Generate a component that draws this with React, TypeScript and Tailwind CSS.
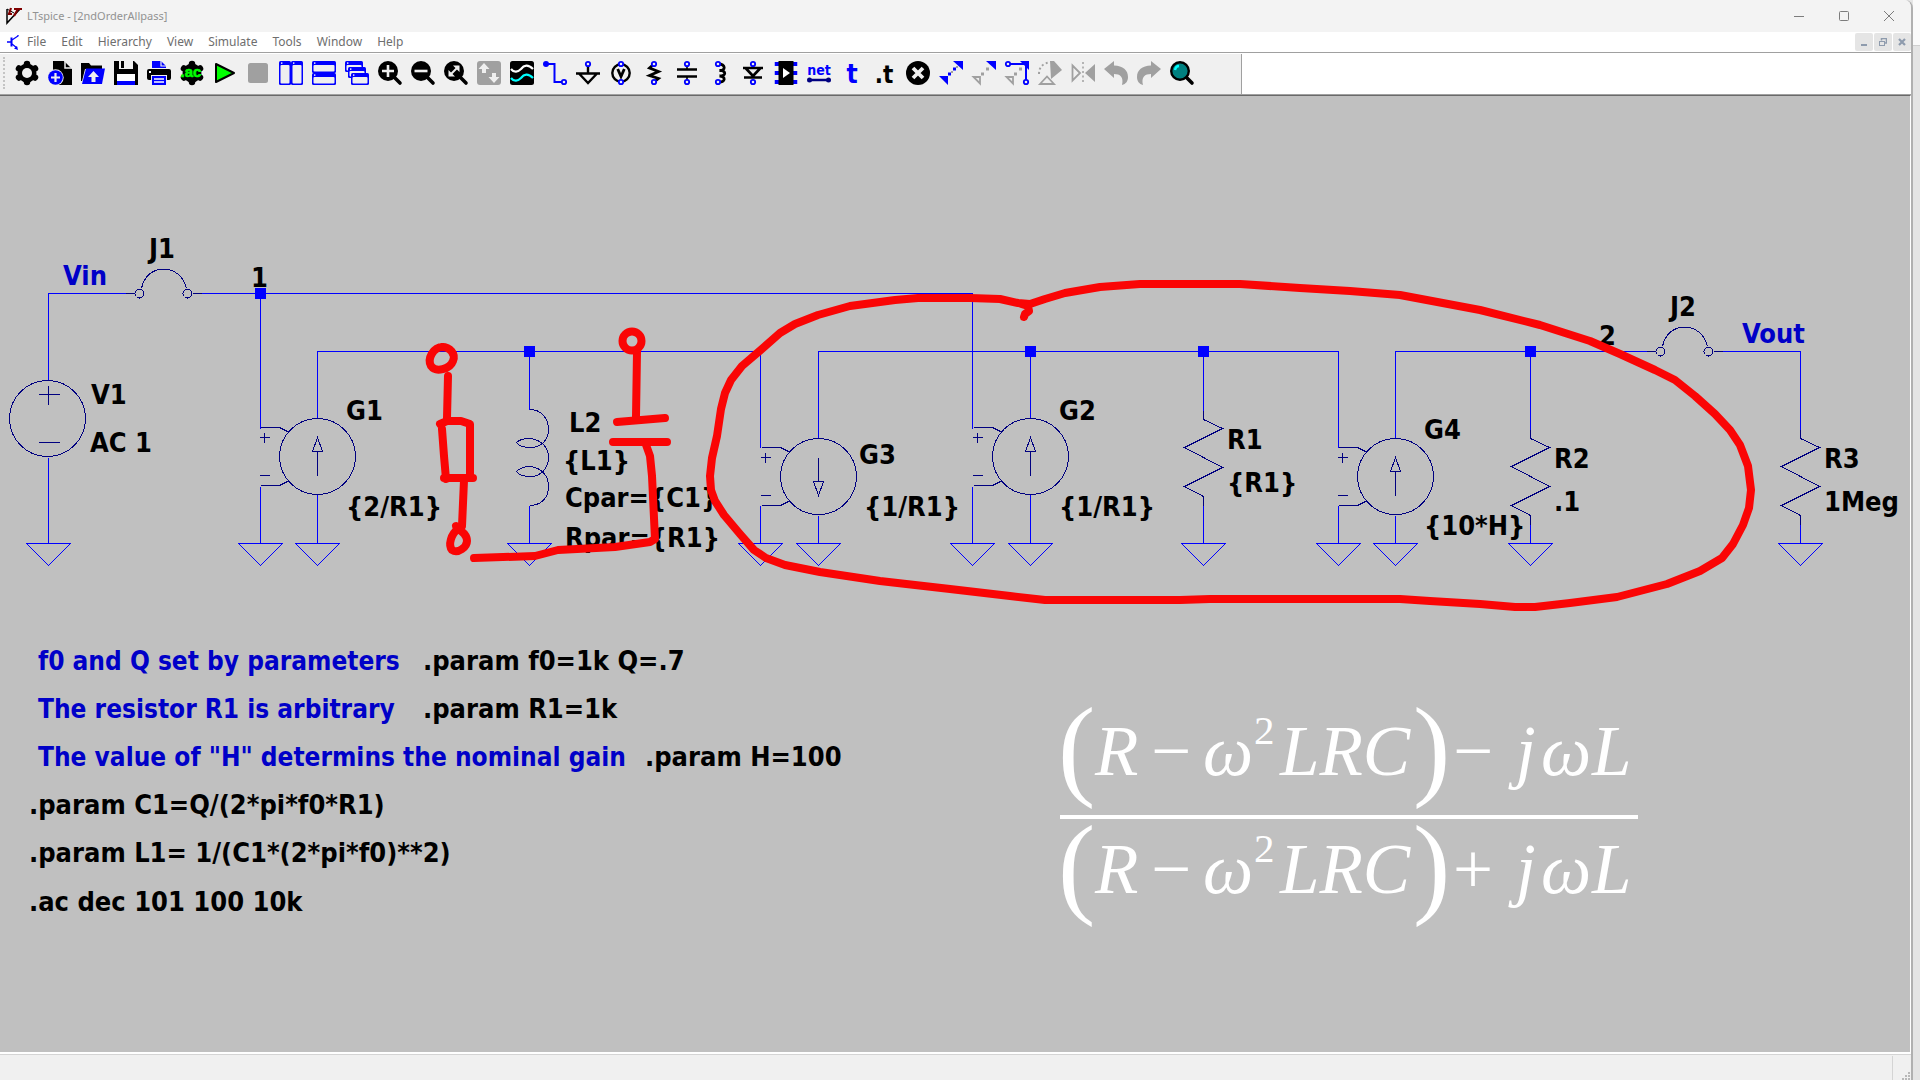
import React from "react";

const MENUS = ["File", "Edit", "Hierarchy", "View", "Simulate", "Tools", "Window", "Help"];

const BLUE = "#0000ff";
const NAVY = "#000080";
const GREY = "#a0a0a0";

const Pin = ({ x, y }: { x: number; y: number }) => (
  <circle cx={x} cy={y} r="2.2" fill="#efefef" stroke={BLUE} strokeWidth="1.8" />
);

const Lens = () => (
  <>
    <path d="M16 16 L22 22" stroke="#000" strokeWidth="3.6" strokeLinecap="round" />
    <circle cx="10" cy="10" r="10" fill="#000" />
  </>
);

const Cog = () => (
  <>
    <circle cx="12" cy="12" r="9.5" fill="#000" />
    <path
      d="M12 3 V21 M4 7.5 L20 16.5 M4 16.5 L20 7.5"
      stroke="#000"
      strokeWidth="6.5"
      strokeLinecap="round"
    />
  </>
);

const Pane = ({ x, y, w, h }: { x: number; y: number; w: number; h: number }) => (
  <>
    <rect x={x} y={y} width={w} height={h} rx="1.5" fill={BLUE} />
    <rect x={x + 1.5} y={y + 4} width={w - 3} height={h - 5.5} rx="1" fill="#efefef" />
    <rect x={x + 2} y={y + 1.4} width="1.4" height="1.4" fill="#fff" />
  </>
);

interface Tool {
  name: string;
  art: React.ReactNode;
}

const TOOLS: Tool[] = [
  {
    name: "Settings",
    art: (
      <>
        <Cog />
        <circle cx="12" cy="12" r="5" fill="#efefef" />
      </>
    ),
  },
  {
    name: "New schematic",
    art: (
      <>
        <path d="M5 0 H16 L24 8 V24 H5 Z" />
        <path d="M17 0 V7 H24" fill="none" stroke="#efefef" strokeWidth="1.5" />
        <circle cx="7.5" cy="16.5" r="8.2" fill="#efefef" />
        <circle cx="7.5" cy="16.5" r="7.3" fill={BLUE} />
        <path d="M7.5 12 V21 M3 16.5 H12" stroke="#efefef" strokeWidth="2.2" />
      </>
    ),
  },
  {
    name: "Open",
    art: (
      <>
        <path d="M0 2 H8 L10 4.5 H21 V8 H4 L1 20 H0 Z" />
        <path d="M5 7.5 H24 L21 23 H1 Z" fill={BLUE} />
        <path d="M12.5 10 L18 16 H14.5 V21 H10.5 V16 H7 Z" fill="#efefef" />
      </>
    ),
  },
  {
    name: "Save",
    art: (
      <>
        <path d="M0 0 H20 L24 4 V24 H0 Z" />
        <rect x="5" y="0" width="14" height="8" fill="#efefef" />
        <rect x="7" y="0" width="3" height="7" />
        <rect x="3" y="13" width="18" height="9" fill="#fff" />
        <rect x="3" y="20" width="18" height="4" fill={BLUE} />
      </>
    ),
  },
  {
    name: "Print",
    art: (
      <>
        <path d="M5 0 H14 L19 5 V7 H5 Z" fill={BLUE} />
        <path d="M14 0 V5 H19" fill="none" stroke="#efefef" strokeWidth="1.2" />
        <rect x="0" y="8" width="24" height="11" rx="2" />
        <rect x="2" y="10" width="2" height="2" fill="#fff" />
        <rect x="4" y="14" width="16" height="10" fill="#efefef" />
        <rect x="5" y="15" width="14" height="9" fill={BLUE} />
        <path d="M7 18 H17 M7 21 H17" stroke="#fff" strokeWidth="1.3" />
      </>
    ),
  },
  {
    name: "Configure analysis",
    art: (
      <>
        <Cog />
        <text
          x="11"
          y="16"
          textAnchor="middle"
          stroke="#00ff00"
          strokeWidth="0.6"
          className="fill-[#00ff00] font-['Liberation_Sans'] text-[15px] font-bold"
        >
          .ac
        </text>
      </>
    ),
  },
  {
    name: "Run",
    art: (
      <path
        d="M3 3 L21 12 L3 21 Z"
        fill="#00ff00"
        stroke="#000"
        strokeWidth="2"
        strokeLinejoin="round"
      />
    ),
  },
  { name: "Stop", art: <rect x="2" y="2" width="20" height="20" rx="2.5" fill={GREY} /> },
  {
    name: "Tile vertically",
    art: (
      <>
        <Pane x={0} y={0} w={12} h={24} />
        <Pane x={12} y={0} w={12} h={24} />
      </>
    ),
  },
  {
    name: "Tile horizontally",
    art: (
      <>
        <Pane x={0} y={0} w={24} h={12} />
        <Pane x={0} y={12} w={24} h={12} />
      </>
    ),
  },
  {
    name: "Cascade",
    art: (
      <>
        <Pane x={0} y={0} w={18} h={11} />
        <Pane x={3} y={6} w={18} h={11} />
        <Pane x={6} y={12} w={18} h={12} />
      </>
    ),
  },
  {
    name: "Zoom in",
    art: (
      <>
        <Lens />
        <path d="M10 4 V16 M4 10 H16" stroke="#efefef" strokeWidth="2.6" />
      </>
    ),
  },
  {
    name: "Zoom out",
    art: (
      <>
        <Lens />
        <path d="M3.5 10 H16.5" stroke="#efefef" strokeWidth="2.6" />
      </>
    ),
  },
  {
    name: "Zoom to fit",
    art: (
      <>
        <Lens />
        <path d="M5.5 14.5 L14.5 5.5" stroke="#efefef" strokeWidth="2" />
        <path d="M4.5 9 V15.5 H11 Z M9 4.5 H15.5 V11 Z" fill="#efefef" />
      </>
    ),
  },
  {
    name: "Autorange",
    art: (
      <>
        <rect width="24" height="24" rx="3" fill={GREY} />
        <path
          d="M7 2 L12.5 8 H9 V12 H5 V8 H1.5 Z M17 22 L11.5 16 H15 V12 H19 V16 H22.5 Z"
          fill="#efefef"
        />
      </>
    ),
  },
  {
    name: "Waveform",
    art: (
      <>
        <rect width="24" height="24" rx="2.5" />
        <path
          d="M1 8 C4 12 8 11 11 8 C14 4 18 3 23 8"
          fill="none"
          stroke="#fff"
          strokeWidth="2.2"
        />
        <path
          d="M1 17 C4 21 8 20 11 17 C14 13 18 12 23 17"
          fill="none"
          stroke="#00ffff"
          strokeWidth="2.2"
        />
      </>
    ),
  },
  {
    name: "Wire",
    art: (
      <>
        <path d="M3 3 H11.5 V21 H20" fill="none" stroke={BLUE} strokeWidth="2" />
        <circle cx="3" cy="3" r="3" fill={BLUE} />
        <Pin x={21} y={21} />
      </>
    ),
  },
  {
    name: "Ground",
    art: (
      <>
        <path
          d="M12 4 V12 M0 12.5 H24 M3 12.5 L12 22 L21 12.5"
          fill="none"
          stroke="#000"
          strokeWidth="2.4"
        />
        <Pin x={12} y={3} />
      </>
    ),
  },
  {
    name: "Voltage source",
    art: (
      <>
        <circle cx="12" cy="12" r="8.7" fill="none" stroke="#000" strokeWidth="2.4" />
        <path d="M8.7 8 L12 15.5 L15.3 8" fill="none" stroke="#000" strokeWidth="2.8" />
        <Pin x={12} y={3} />
        <Pin x={12} y={21} />
      </>
    ),
  },
  {
    name: "Resistor",
    art: (
      <>
        <path
          d="M12 3 L7.5 7 L16.5 10.5 L7.5 14.5 L16.5 17.5 L12 21"
          fill="none"
          stroke="#000"
          strokeWidth="2.8"
        />
        <Pin x={12} y={3} />
        <Pin x={12} y={21} />
      </>
    ),
  },
  {
    name: "Capacitor",
    art: (
      <>
        <path d="M12 3 V9 M12 15 V21" stroke="#000" strokeWidth="1.6" />
        <path d="M2 8.5 H22 M2 15.5 H22" stroke="#000" strokeWidth="2.6" />
        <Pin x={12} y={3} />
        <Pin x={12} y={21} />
      </>
    ),
  },
  {
    name: "Inductor",
    art: (
      <>
        <path
          d="M10 3 C18 3 18 10 11.5 9.5 C18.5 9 18.5 15.5 11.5 15 C18 15 18 22 10 21"
          fill="none"
          stroke="#000"
          strokeWidth="2.8"
        />
        <Pin x={10} y={3} />
        <Pin x={10} y={21} />
      </>
    ),
  },
  {
    name: "Diode",
    art: (
      <>
        <path
          d="M2 7 H22 M4.5 7 L12 15 L19.5 7 M3 16.5 H21"
          fill="none"
          stroke="#000"
          strokeWidth="2.6"
        />
        <Pin x={12} y={3} />
        <Pin x={12} y={21} />
      </>
    ),
  },
  {
    name: "Component",
    art: (
      <>
        <path d="M3 1 V23 M21 1 V23" stroke={BLUE} strokeWidth="4.5" strokeDasharray="4 5" />
        <rect x="4.5" y="0" width="15" height="24" />
        <path d="M9 7 L16 12 L9 17 Z" fill="#fff" />
      </>
    ),
  },
  {
    name: "Label net",
    art: (
      <>
        <text
          x="12"
          y="14"
          textAnchor="middle"
          className="fill-[#0000ff] font-['DejaVu_Sans_Condensed'] text-[14px] font-bold"
        >
          net
        </text>
        <path d="M3 19 H21" stroke={NAVY} strokeWidth="2.5" />
        <circle cx="2.5" cy="19" r="2.5" fill={NAVY} />
        <circle cx="21.5" cy="19" r="2.5" fill={NAVY} />
      </>
    ),
  },
  {
    name: "Text",
    art: (
      <text
        x="12"
        y="22"
        textAnchor="middle"
        className="fill-[#0000ff] font-['DejaVu_Sans_Condensed'] text-[26px] font-bold"
      >
        t
      </text>
    ),
  },
  {
    name: "Directive",
    art: (
      <text
        x="11"
        y="22"
        textAnchor="middle"
        className="fill-black font-['DejaVu_Sans_Condensed'] text-[24px] font-bold"
      >
        .t
      </text>
    ),
  },
  {
    name: "Delete",
    art: (
      <>
        <circle cx="12" cy="12" r="12" />
        <path d="M7 7 L17 17 M17 7 L7 17" stroke="#efefef" strokeWidth="3.8" />
      </>
    ),
  },
  {
    name: "Move",
    art: (
      <>
        <path d="M14 0 H24 V9 Z M0 15 H9 V24 Z" fill={BLUE} />
        <path d="M9 14.5 H12 V11.5 H9 Z M14 9.5 H17 V6.5 H14 Z" fill={BLUE} />
        <path d="M12 12 H14 V10 H12 Z M17 7 H19 V5 H17 Z" fill={GREY} />
      </>
    ),
  },
  {
    name: "Copy",
    art: (
      <>
        <path d="M14 0 H24 V9 Z" fill={BLUE} />
        <path d="M1.5 16 H8 V22.5 Z" fill="#efefef" stroke={GREY} strokeWidth="1.8" />
        <path d="M9 14.5 H12 V11.5 H9 Z M14 9.5 H17 V6.5 H14 Z" fill={GREY} />
      </>
    ),
  },
  {
    name: "Stretch",
    art: (
      <>
        <path d="M3 3 H21 V21" fill="none" stroke={BLUE} strokeWidth="2" />
        <path d="M15 0 H24 V9 Z" fill={BLUE} />
        <path d="M1.5 16 H8 V22.5 Z" fill="#efefef" stroke={GREY} strokeWidth="1.8" />
        <path d="M9 14.5 H12 V11.5 H9 Z M14 9.5 H17 V6.5 H14 Z" fill={GREY} />
        <Pin x={3} y={3} />
        <Pin x={21} y={21} />
      </>
    ),
  },
  {
    name: "Rotate",
    art: (
      <>
        <path d="M12 0 H16 L24 9 L13 18 Z" fill={GREY} />
        <path
          d="M1 13 C1 6 5 2 12 1.5"
          fill="none"
          stroke={GREY}
          strokeWidth="2"
          strokeDasharray="2 2.5"
        />
        <path d="M2 23 L9 15.5 L16 23 Z" fill="#efefef" stroke={GREY} strokeWidth="1.8" />
      </>
    ),
  },
  {
    name: "Mirror",
    art: (
      <>
        <path d="M1.5 4.5 L9 12 L1.5 19.5 Z" fill="none" stroke={GREY} strokeWidth="1.8" />
        <path d="M24 3 L14 12 L24 21 Z" fill={GREY} />
        <path d="M12 1 V23" stroke={GREY} strokeWidth="1.5" strokeDasharray="2 2.5" />
      </>
    ),
  },
  {
    name: "Undo",
    art: (
      <path
        d="M0 8 L10 0 V4.5 C19 5 24 9 24 16 C24 20 22 23 18 24 C20 16 16 13 10 13 V17 Z"
        fill={GREY}
      />
    ),
  },
  {
    name: "Redo",
    art: (
      <path
        d="M24 8 L14 0 V4.5 C5 5 0 9 0 16 C0 20 2 23 6 24 C4 16 8 13 14 13 V17 Z"
        fill={GREY}
      />
    ),
  },
  {
    name: "Find",
    art: (
      <>
        <path d="M16 16 L22 22" stroke="#000" strokeWidth="3.6" strokeLinecap="round" />
        <circle cx="10" cy="10" r="8.8" fill="#008080" stroke="#000" strokeWidth="2.4" />
        <path d="M5 9 C5.5 6.5 7 5 9 5" fill="none" stroke="#00ffff" strokeWidth="2.4" />
      </>
    ),
  },
];

// schematic symbols, in canvas pixels

const GroundSymbol = ({ x }: { x: number }) => (
  <path d={`M${x - 22} 447 H${x + 22} L${x} 469 Z`} stroke={BLUE} />
);

const Junction = ({ x, y }: { x: number; y: number }) => (
  <rect x={x - 5.5} y={y - 5.5} width="11" height="11" fill={BLUE} stroke="none" />
);

const Jumper = ({ x, y }: { x: number; y: number }) => (
  <g stroke={NAVY}>
    <circle cx={x - 24} cy={y} r="4.5" />
    <circle cx={x + 24} cy={y} r="4.5" />
    <path d={`M${x - 22} ${y - 5} C${x - 17} ${y - 31} ${x + 17} ${y - 31} ${x + 23} ${y - 5}`} />
    <path d={`M${x - 38} ${y} H${x - 29} M${x + 29} ${y} H${x + 38}`} />
  </g>
);

const ResistorSymbol = ({ x, y }: { x: number; y: number }) => (
  <path
    d={`M${x} ${y - 9} V${y} L${x + 19} ${y + 9} L${x - 19} ${y + 28} L${x + 19} ${y + 48} L${x - 19} ${y + 67} L${x} ${y + 77} V${y + 86}`}
    stroke={NAVY}
  />
);

interface SourceProps {
  x: number;
  y: number;
  down?: boolean;
}

const ControlledSource = ({ x, y, down }: SourceProps) => (
  <g stroke={NAVY}>
    <circle cx={x} cy={y} r="38" />
    <path d={`M${x - 57} ${y - 29} H${x - 38} L${x - 28} ${y - 24}`} />
    <path d={`M${x - 57} ${y + 29} H${x - 38} L${x - 28} ${y + 24}`} />
    <path d={`M${x - 58} ${y - 19} h10 m-5 -5 v10`} />
    <path d={`M${x - 58} ${y + 19} h10`} />
    {down ? (
      <path d={`M${x} ${y - 19} v24 h-5 l5 14 l5 -14 h-5`} />
    ) : (
      <path d={`M${x} ${y + 19} v-24 h-5 l5 -14 l5 14 h-5`} />
    )}
  </g>
);

const LABELS = [
  { x: 149, y: 162, text: "J1" },
  { x: 251, y: 191, text: "1" },
  { x: 91, y: 308, text: "V1" },
  { x: 90, y: 356, text: "AC 1" },
  { x: 346, y: 324, text: "G1" },
  { x: 346, y: 420, text: "{2/R1}" },
  { x: 569, y: 336, text: "L2" },
  { x: 563, y: 374, text: "{L1}" },
  { x: 565, y: 411, text: "Cpar={C1}" },
  { x: 565, y: 451, text: "Rpar={R1}" },
  { x: 859, y: 368, text: "G3" },
  { x: 864, y: 420, text: "{1/R1}" },
  { x: 1059, y: 324, text: "G2" },
  { x: 1059, y: 420, text: "{1/R1}" },
  { x: 1227, y: 353, text: "R1" },
  { x: 1227, y: 396, text: "{R1}" },
  { x: 1424, y: 343, text: "G4" },
  { x: 1424, y: 439, text: "{10*H}" },
  { x: 1554, y: 372, text: "R2" },
  { x: 1554, y: 415, text: ".1" },
  { x: 1824, y: 372, text: "R3" },
  { x: 1824, y: 415, text: "1Meg" },
  { x: 1670, y: 220, text: "J2" },
  { x: 1599, y: 249, text: "2" },
  { x: 423, y: 574, text: ".param f0=1k Q=.7" },
  { x: 423, y: 622, text: ".param R1=1k" },
  { x: 645, y: 670, text: ".param H=100" },
  { x: 29, y: 718, text: ".param C1=Q/(2*pi*f0*R1)" },
  { x: 29, y: 766, text: ".param L1= 1/(C1*(2*pi*f0)**2)" },
  { x: 29, y: 815, text: ".ac dec 101 100 10k" },
];

const NET_NAMES = [
  { x: 63, y: 189, text: "Vin" },
  { x: 1742, y: 247, text: "Vout" },
];

const COMMENTS = [
  { x: 38, y: 574, text: "f0 and Q set by parameters" },
  { x: 38, y: 622, text: "The resistor R1 is arbitrary" },
  { x: 38, y: 670, text: 'The value of "H" determins the nominal gain' },
];

const FormulaRow = ({ y, sign }: { y: number; sign: string }) => (
  <>
    <g className="text-[112px]">
      <text x="1058" y={y + 10}>(</text>
      <text x="1413" y={y + 10}>)</text>
    </g>
    <g className="text-[71px] italic">
      <text x="1095" y={y}>R</text>
      <text x="1203" y={y}>ω</text>
      <text x="1280" y={y}>LRC</text>
      <text x="1516" y={y}>j</text>
      <text x="1541" y={y}>ω</text>
      <text x="1592" y={y}>L</text>
    </g>
    <g className="text-[71px]">
      <text x="1151" y={y}>−</text>
      <text x="1453" y={y}>{sign}</text>
    </g>
    <text x="1254" y={y - 31} className="text-[41px]">2</text>
  </>
);

const Schematic = () => (
  <svg className="min-h-[840px] flex-1" role="img" aria-label="Second order allpass schematic">
    <g fill="none" strokeWidth="1" shapeRendering="crispEdges" transform="translate(0.5 0.5)">
      <g stroke={BLUE}>
        <path d="M48 284 V197 H134 M192 197 H972 V332 M260 197 V332" />
        <path d="M48 361 V447 M260 390 V447 M317 398 V447 M760 409 V447 M818 419 V447" />
        <path d="M972 390 V447 M1030 398 V447 M1338 409 V447 M1395 419 V447" />
        <path d="M317 322 V255 H760 V351 M529 255 V313 M529 409 V447" />
        <path d="M818 342 V255 H1338 V351 M1030 255 V322 M1203 255 V323 M1203 400 V447" />
        <path d="M1395 342 V255 H1655 M1713 255 H1800 V342 M1530 255 V342 M1530 419 V447 M1800 419 V447" />
      </g>
      {[48, 260, 317, 529, 760, 818, 972, 1030, 1203, 1338, 1395, 1530, 1800].map((x) => (
        <GroundSymbol key={x} x={x} />
      ))}

      <g stroke={NAVY}>
        <circle cx="47" cy="322" r="38" />
        <path d="M38 298 H59 M48 289 V308 M38 346 H59" />
      </g>
      <path
        d="M529 313 C542 313 548 323 548 333 C548 344 540 351 530 351 C523 351 518 349 516 346 C519 343 524 342 529 342 C541 343 548 351 548 361 C548 372 540 380 530 380 C523 380 518 378 516 375 C519 372 524 370 529 370 C541 371 548 379 548 390 C548 402 540 409 529 409"
        stroke={NAVY}
      />
      <Jumper x={163} y={197} />
      <Jumper x={1684} y={255} />
      <ControlledSource x={317} y={360} />
      <ControlledSource x={818} y={380} down />
      <ControlledSource x={1030} y={360} />
      <ControlledSource x={1395} y={380} />
      <ResistorSymbol x={1203} y={323} />
      <ResistorSymbol x={1530} y={342} />
      <ResistorSymbol x={1800} y={342} />
      <Junction x={260} y={197} />
      <Junction x={529} y={255} />
      <Junction x={1030} y={255} />
      <Junction x={1203} y={255} />
      <Junction x={1530} y={255} />
    </g>

    <g className="font-['DejaVu_Sans_Condensed','DejaVu_Sans',sans-serif] font-bold">
      <g className="text-[27px]">
        {LABELS.map((l) => (
          <text key={`${l.x}-${l.y}`} x={l.x} y={l.y}>
            {l.text}
          </text>
        ))}
      </g>
      <g className="fill-[#0000c8] text-[27px]">
        {NET_NAMES.map((n) => (
          <text key={n.text} x={n.x} y={n.y}>
            {n.text}
          </text>
        ))}
      </g>
      <g className="fill-[#0000c8] text-[26px]">
        {COMMENTS.map((c) => (
          <text key={c.y} x={c.x} y={c.y}>
            {c.text}
          </text>
        ))}
      </g>
    </g>

    <g className="fill-white font-['Liberation_Serif',serif]">
      <FormulaRow y={679} sign="−" />
      <rect x="1060" y="719" width="578" height="4" />
      <FormulaRow y={797} sign="+" />
    </g>

    {/* pen marks */}
    <g fill="none" stroke="#fa0505" strokeWidth="8" strokeLinecap="round" strokeLinejoin="round">
      <path d="M1024 221 L1025 218 L1029 215 L1028 210 L1018 207 L1000 203 L970 202 L945 202 L918 202 L895 204 L850 210 L818 219 L795 228 L780 237 L763 252 L742 270 L731 284 L725 297 L721 313 L717 340 L712 362 L710 380 L711 394 L715 405 L724 419 L740 438 L754 454 L766 462 L785 469 L820 476 L880 485 L950 493 L1010 500 L1045 504 L1180 504 L1210 503 L1400 503 L1430 505 L1480 508 L1515 511 L1535 511 L1570 507 L1617 501 L1667 488 L1700 475 L1722 462 L1733 448 L1743 429 L1749 412 L1751 394 L1748 370 L1740 349 L1730 334 L1715 318 L1695 300 L1675 284 L1655 274 L1620 258 L1590 245 L1540 229 L1480 214 L1400 199 L1350 195 L1300 192 L1240 188 L1140 188 L1100 191 L1065 197 L1045 203 L1030 208 L1018 207" />
      <path d="M442 251 C450 251 456 258 453 265 C450 273 436 277 431 270 C427 263 433 251 443 251" />
      <path d="M448 280 L447 322 M440 328 L447 325 L461 325 L470 328 V380 M442 333 L444 360 L446 383 M444 382 H473 M464 384 L462 430" />
      <path d="M458 433 C451 438 448 449 452 454 C458 458 467 451 467 445 C467 440 463 435 457 433 L456 430" />
      <path d="M474 462 L535 460 L558 454 L615 451 L650 446 L655 443 L652 380 L650 360 L645 346" />
      <path d="M617 326 L665 322 M613 346 H667 M636 321 L637 256" />
      <circle cx="632" cy="245" r="9.5" />
    </g>
  </svg>
);

const captionButton = "flex h-8 w-[45px] items-center justify-center text-[#7c7c7c]";
const mdiButton =
  "flex h-[18px] w-[18px] items-center justify-center rounded-xs bg-[#e5e5e5] text-[#8e9bad]";

const App = () => {
  return (
    <div className="flex min-h-screen bg-[#e6e6e6]">
      <div className="flex min-w-0 flex-1 flex-col overflow-hidden rounded-tr-lg border-r-2 border-[#b0b0b0] bg-[#f0f0f0]">
        <header className="flex h-8 items-center bg-[#f3f3f3] pl-[6px]">
          <svg width="16" height="18" viewBox="0 0 16 18" aria-hidden="true">
            <path d="M1 2 V16 L14 2" fill="none" stroke="#000" strokeWidth="1.5" />
            <path d="M1 2 L8 6" stroke="#000" />
            <path
              d="M5 1 L3 7 H6 M8 2 H16 M12 2 L8 9"
              fill="none"
              stroke="#800000"
              strokeWidth="2.2"
            />
          </svg>
          <h1 className="ml-[5px] flex-1 font-['Noto_Sans',sans-serif] text-[11px] text-[#929292]">
            LTspice - [2ndOrderAllpass]
          </h1>
          <button type="button" aria-label="Minimize" className={captionButton}>
            <svg width="10" height="10" stroke="currentColor">
              <path d="M0 5.5 H10" />
            </svg>
          </button>
          <button type="button" aria-label="Maximize" className={captionButton}>
            <svg width="10" height="10" fill="none" stroke="currentColor">
              <rect x="0.5" y="0.5" width="9" height="9" rx="1" />
            </svg>
          </button>
          <button type="button" aria-label="Close" className={captionButton}>
            <svg width="10" height="10" stroke="currentColor">
              <path d="M0 0 L10 10 M10 0 L0 10" />
            </svg>
          </button>
        </header>

        <nav className="flex h-[21px] items-center border-b border-[#a0a0a0] bg-white pl-[7px]">
          <svg width="12" height="16" viewBox="0 0 12 16" fill="none" stroke={BLUE} aria-hidden="true">
            <path d="M0 8 H4 M11 1 V2 L5 6 M5 10 L10 14" strokeWidth="1.3" />
            <path d="M4.5 3.5 V12.5" strokeWidth="2" />
            <path d="M11 16 L7 14.5 L10 12 Z" fill={BLUE} stroke="none" />
          </svg>
          <ul className="flex flex-1 gap-[15px] pl-2">
            {MENUS.map((menu) => (
              <li key={menu} className="flex">
                <button
                  type="button"
                  className="font-['Noto_Sans',sans-serif] text-[12px] leading-[16px] text-[#6e6e6e]"
                >
                  {menu}
                </button>
              </li>
            ))}
          </ul>
          <div className="flex gap-px">
            <button type="button" aria-label="Minimize document" className={mdiButton}>
              <svg width="8" height="8" stroke="currentColor" strokeWidth="2">
                <path d="M1 7 H7" />
              </svg>
            </button>
            <button type="button" aria-label="Restore document" className={mdiButton}>
              <svg width="8" height="8" fill="none" stroke="currentColor">
                <path d="M2.5 2.5 V0.5 H7.5 V5 H6" strokeWidth="1.5" />
                <rect x="0.5" y="3.5" width="5" height="4" />
              </svg>
            </button>
            <button type="button" aria-label="Close document" className={mdiButton}>
              <svg width="8" height="8" stroke="currentColor" strokeWidth="2.2">
                <path d="M1 1 L7 7 M7 1 L1 7" />
              </svg>
            </button>
          </div>
        </nav>

        <div className="flex border-t border-b border-t-white border-b-[#a0a0a0] bg-white">
          <div
            role="toolbar"
            aria-label="Schematic tools"
            className="flex h-10 items-center border-r border-[#a0a0a0] bg-[#f0f0f0] pr-[47px] pb-[2px] pl-[3px]"
          >
            <div className="mr-[10px] h-8 w-0 border-l-2 border-dotted border-[#c4c4c4]" />
            <div className="flex gap-[9px]">
              {TOOLS.map((tool) => (
                <button key={tool.name} type="button" aria-label={tool.name} title={tool.name}>
                  <svg width="24" height="24" viewBox="0 0 24 24" className="block overflow-visible">
                    {tool.art}
                  </svg>
                </button>
              ))}
            </div>
          </div>
        </div>

        <main className="flex flex-1 border-t border-r border-b-2 border-t-[#696969] border-r-white border-b-white bg-[#c0c0c0]">
          <Schematic />
        </main>

        <footer className="flex h-[26px] items-end justify-end border-t border-[#d4d4d4] bg-[#f0f0f0]">
          <div className="h-6 w-[19px] border-l border-[#d4d4d4]" />
          <svg width="9" height="8" fill="#b8b8b8" className="-ml-[9px]" aria-hidden="true">
            <path d="M6 0 h2 v2 h-2 Z M3 3 h2 v2 h-2 Z M6 3 h2 v2 h-2 Z M0 6 h2 v2 h-2 Z M3 6 h2 v2 h-2 Z M6 6 h2 v2 h-2 Z" />
          </svg>
        </footer>
      </div>
      <aside className="w-[7px] bg-[#e4e4e4]">
        <div className="h-[46px] border-b border-[#cfcfcf] bg-[#fafafa]" />
      </aside>
    </div>
  );
};

export default App;
